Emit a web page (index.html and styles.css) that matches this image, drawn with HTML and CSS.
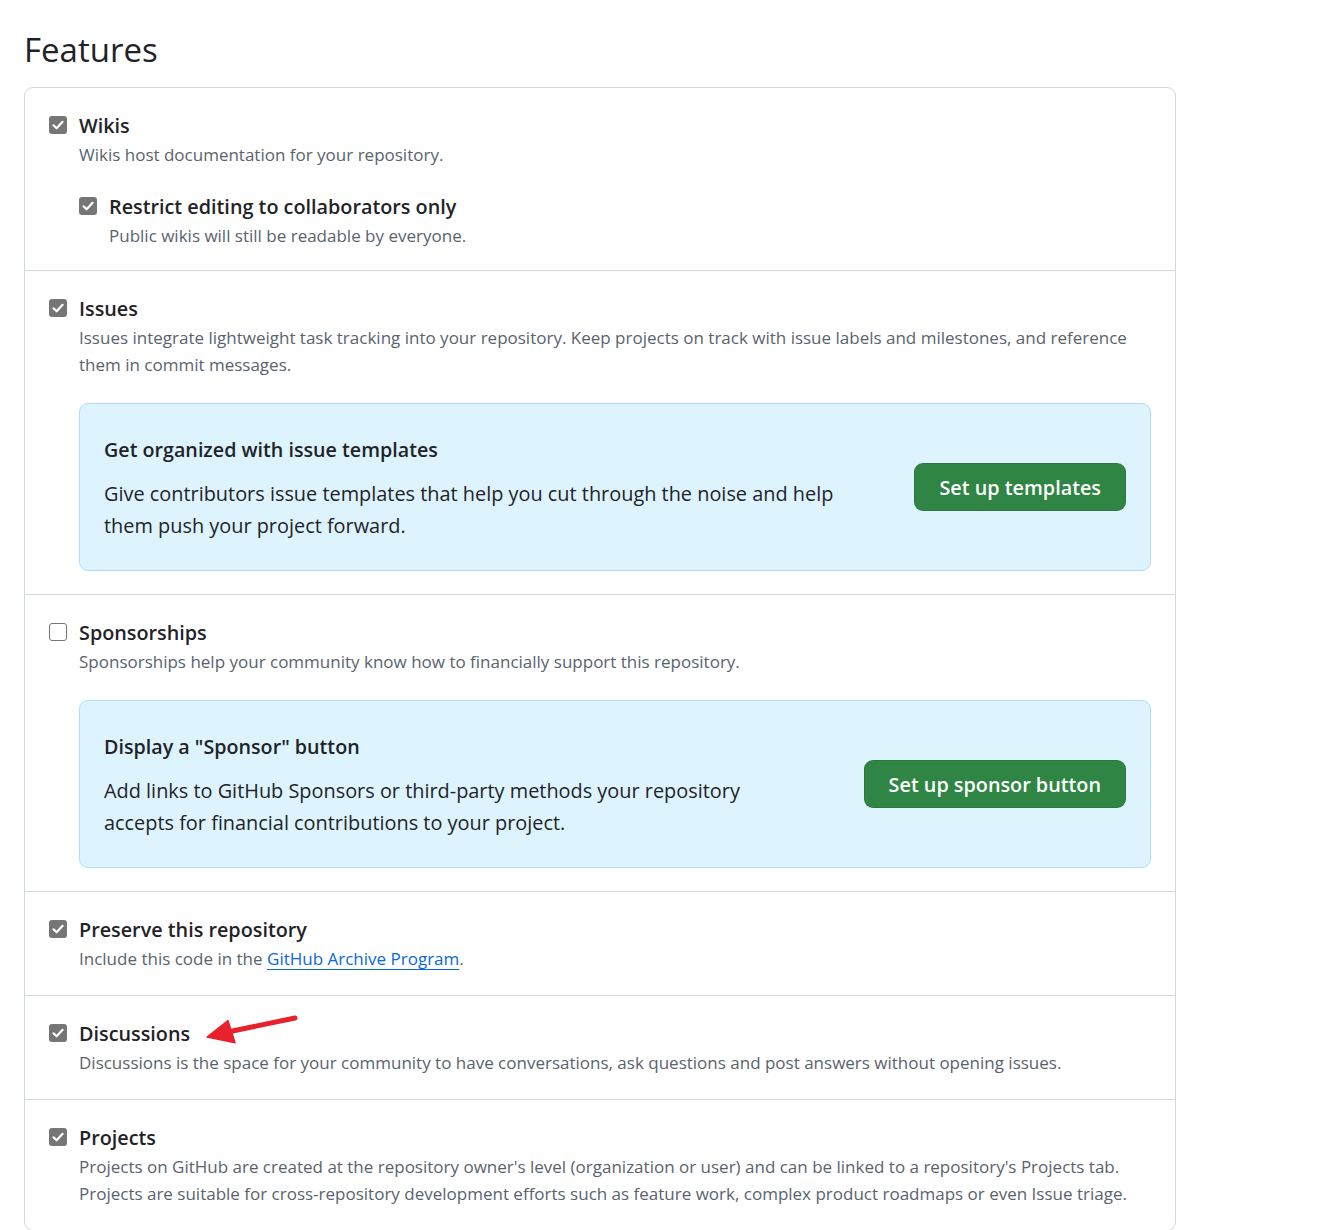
FILE: index.html
```html
<!DOCTYPE html>
<html lang="en">
<head>
    <meta charset="UTF-8">
    <meta name="viewport" content="width=device-width, initial-scale=1.0">
    <title>Settings - Features</title>
    <link rel="stylesheet" href="styles.css">
</head>
<body>
    <div class="page">
        <h2 class="page-title">Features</h2>

        <div class="features">
            <!-- Wikis -->
            <div class="feature">
                <div class="check">
                    <span class="box checked"><svg viewBox="0 0 18 18"><polyline points="4.5,9.3 7.6,12.3 13.6,5.8"/></svg></span>
                    <div class="check-body">
                        <div class="check-label">Wikis</div>
                        <div class="check-note">Wikis host documentation for your repository.</div>
                    </div>
                </div>
                <div class="check sub">
                    <span class="box checked"><svg viewBox="0 0 18 18"><polyline points="4.5,9.3 7.6,12.3 13.6,5.8"/></svg></span>
                    <div class="check-body">
                        <div class="check-label">Restrict editing to collaborators only</div>
                        <div class="check-note">Public wikis will still be readable by everyone.</div>
                    </div>
                </div>
            </div>

            <!-- Issues -->
            <div class="feature">
                <div class="check">
                    <span class="box checked"><svg viewBox="0 0 18 18"><polyline points="4.5,9.3 7.6,12.3 13.6,5.8"/></svg></span>
                    <div class="check-body">
                        <div class="check-label">Issues</div>
                        <div class="check-note">Issues integrate lightweight task tracking into your repository. Keep projects on track with issue labels and milestones, and reference them in commit messages.</div>
                    </div>
                </div>
                <div class="callout">
                    <div class="callout-text">
                        <div class="callout-title">Get organized with issue templates</div>
                        <p>Give contributors issue templates that help you cut through the noise and help them push your project forward.</p>
                    </div>
                    <button class="btn primary">Set up templates</button>
                </div>
            </div>

            <!-- Sponsorships -->
            <div class="feature">
                <div class="check">
                    <span class="box"></span>
                    <div class="check-body">
                        <div class="check-label">Sponsorships</div>
                        <div class="check-note">Sponsorships help your community know how to financially support this repository.</div>
                    </div>
                </div>
                <div class="callout">
                    <div class="callout-text">
                        <div class="callout-title">Display a "Sponsor" button</div>
                        <p>Add links to GitHub Sponsors or third-party methods your repository accepts for financial contributions to your project.</p>
                    </div>
                    <button class="btn primary">Set up sponsor button</button>
                </div>
            </div>

            <!-- Preserve -->
            <div class="feature">
                <div class="check">
                    <span class="box checked"><svg viewBox="0 0 18 18"><polyline points="4.5,9.3 7.6,12.3 13.6,5.8"/></svg></span>
                    <div class="check-body">
                        <div class="check-label">Preserve this repository</div>
                        <div class="check-note">Include this code in the <a href="#">GitHub Archive Program</a>.</div>
                    </div>
                </div>
            </div>

            <!-- Discussions -->
            <div class="feature">
                <div class="check">
                    <span class="box checked"><svg viewBox="0 0 18 18"><polyline points="4.5,9.3 7.6,12.3 13.6,5.8"/></svg></span>
                    <div class="check-body">
                        <div class="check-label">Discussions</div>
                        <div class="check-note">Discussions is the space for your community to have conversations, ask questions and post answers without opening issues.</div>
                    </div>
                </div>
                <svg class="marker" viewBox="0 0 100 34">
                    <line x1="30" y1="19.5" x2="95" y2="6"/>
                    <polygon points="7,25 28,8.7 35,30.7"/>
                </svg>
            </div>

            <!-- Projects -->
            <div class="feature">
                <div class="check">
                    <span class="box checked"><svg viewBox="0 0 18 18"><polyline points="4.5,9.3 7.6,12.3 13.6,5.8"/></svg></span>
                    <div class="check-body">
                        <div class="check-label">Projects</div>
                        <div class="check-note">Projects on GitHub are created at the repository owner's level (organization or user) and can be linked to a repository's Projects tab. Projects are suitable for cross-repository development efforts such as feature work, complex product roadmaps or even Issue triage.</div>
                    </div>
                </div>
            </div>
        </div>
    </div>
</body>
</html>
```

FILE: styles.css
```css
* {
    margin: 0;
    padding: 0;
    box-sizing: border-box;
}

body {
    font-family: 'Open Sans', 'Noto Sans', sans-serif;
    color: #1f2328;
    background-color: #fff;
}

.page {
    padding: 0 24px;
}

.page-title {
    font-size: 33px;
    font-weight: 400;
    line-height: 45px;
    padding-top: 27px;
    margin-bottom: 15px;
}

.features {
    width: 1152px;
    border: 1px solid #d1d9e0;
    border-radius: 9px;
}

.feature {
    position: relative;
    padding: 23px 24px;
}

.feature:first-child {
    padding-bottom: 21px;
}

.feature + .feature {
    border-top: 1px solid #d1d9e0;
}

.check {
    display: flex;
    align-items: flex-start;
}

.check.sub {
    margin-top: 24px;
    margin-left: 30px;
}

.box {
    flex-shrink: 0;
    width: 18px;
    height: 18px;
    margin-top: 5px;
    margin-right: 12px;
    border: 1.5px solid #767676;
    border-radius: 3px;
    background-color: #fff;
}

.box.checked {
    border: none;
    background-color: #767676;
}

.box svg {
    display: block;
    width: 18px;
    height: 18px;
    fill: none;
    stroke: #fff;
    stroke-width: 2.2;
    stroke-linecap: round;
    stroke-linejoin: round;
}

.check-label {
    font-size: 19.8px;
    font-weight: 600;
    line-height: 30px;
}

.check-note {
    font-size: 17px;
    line-height: 27px;
    color: #59636e;
}

.check-note a {
    color: #0969da;
    text-decoration: underline;
    text-underline-offset: 4px;
}

.callout {
    display: flex;
    align-items: center;
    gap: 64px;
    margin-top: 25px;
    margin-left: 30px;
    padding: 28px 24px;
    background-color: #ddf4ff;
    border: 1px solid #b0dcfc;
    border-radius: 9px;
}

.callout-text {
    flex: 1;
}

.callout-title {
    font-size: 19.7px;
    font-weight: 600;
    line-height: 36px;
    margin-bottom: 10px;
}

.callout-text p {
    font-size: 19.9px;
    line-height: 32px;
}

.btn {
    flex-shrink: 0;
    height: 48px;
    padding: 0 24px;
    border: 1px solid rgba(31, 35, 40, 0.15);
    border-radius: 9px;
    font-family: inherit;
    font-size: 19.8px;
    font-weight: 600;
    cursor: pointer;
}

.btn.primary {
    background-color: #2f8543;
    color: #fff;
}

.marker {
    position: absolute;
    left: 175px;
    top: 16px;
    width: 100px;
    height: 34px;
}

.marker line {
    stroke: #e8222d;
    stroke-width: 5;
    stroke-linecap: round;
}

.marker polygon {
    fill: #e8222d;
    stroke: #e8222d;
    stroke-width: 1.5;
    stroke-linejoin: round;
}
```
